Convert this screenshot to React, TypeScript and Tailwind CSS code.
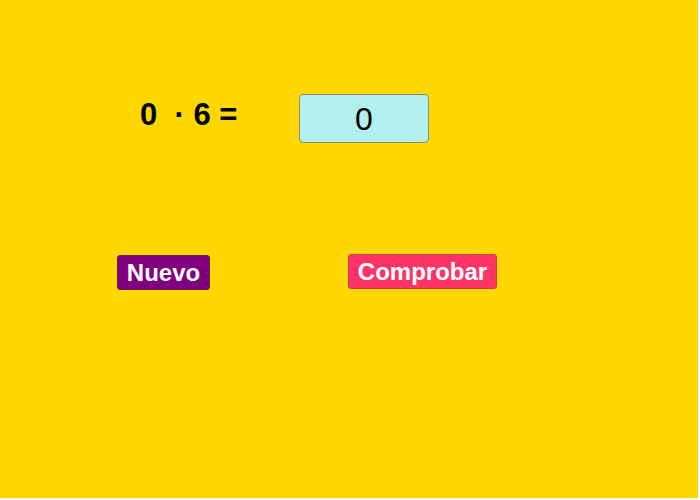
export default function App() {
  return (
    <div className="w-[698px] h-[498px] bg-[#FFD700] overflow-hidden" style={{ fontFamily: '"Liberation Sans", Arial, sans-serif' }}>
      <div className="flex items-start pt-[94px]">
        <div className="ml-[140px] w-[159px] h-[41px] flex items-center text-[31px] font-bold text-black leading-none whitespace-pre">
          {"0  · 6 ="}
        </div>
        <div className="w-[130px] h-[49px] bg-[#B2EFF0] border border-[#8a8a7a] rounded-[4px] flex items-center justify-center text-[32px] text-black leading-none">
          0
        </div>
      </div>
      <div className="flex items-start mt-[111px]">
        <button className="ml-[117px] mt-[1px] w-[93px] h-[35px] bg-[#800080] border border-[#6a1a5a] rounded-[3px] text-white font-bold text-[24px] leading-none flex items-center justify-center">
          Nuevo
        </button>
        <button className="ml-[138px] w-[149px] h-[35px] bg-[#FF3366] border border-[#c8404f] rounded-[3px] text-white font-bold text-[24px] leading-none flex items-center justify-center">
          Comprobar
        </button>
      </div>
    </div>
  );
}
